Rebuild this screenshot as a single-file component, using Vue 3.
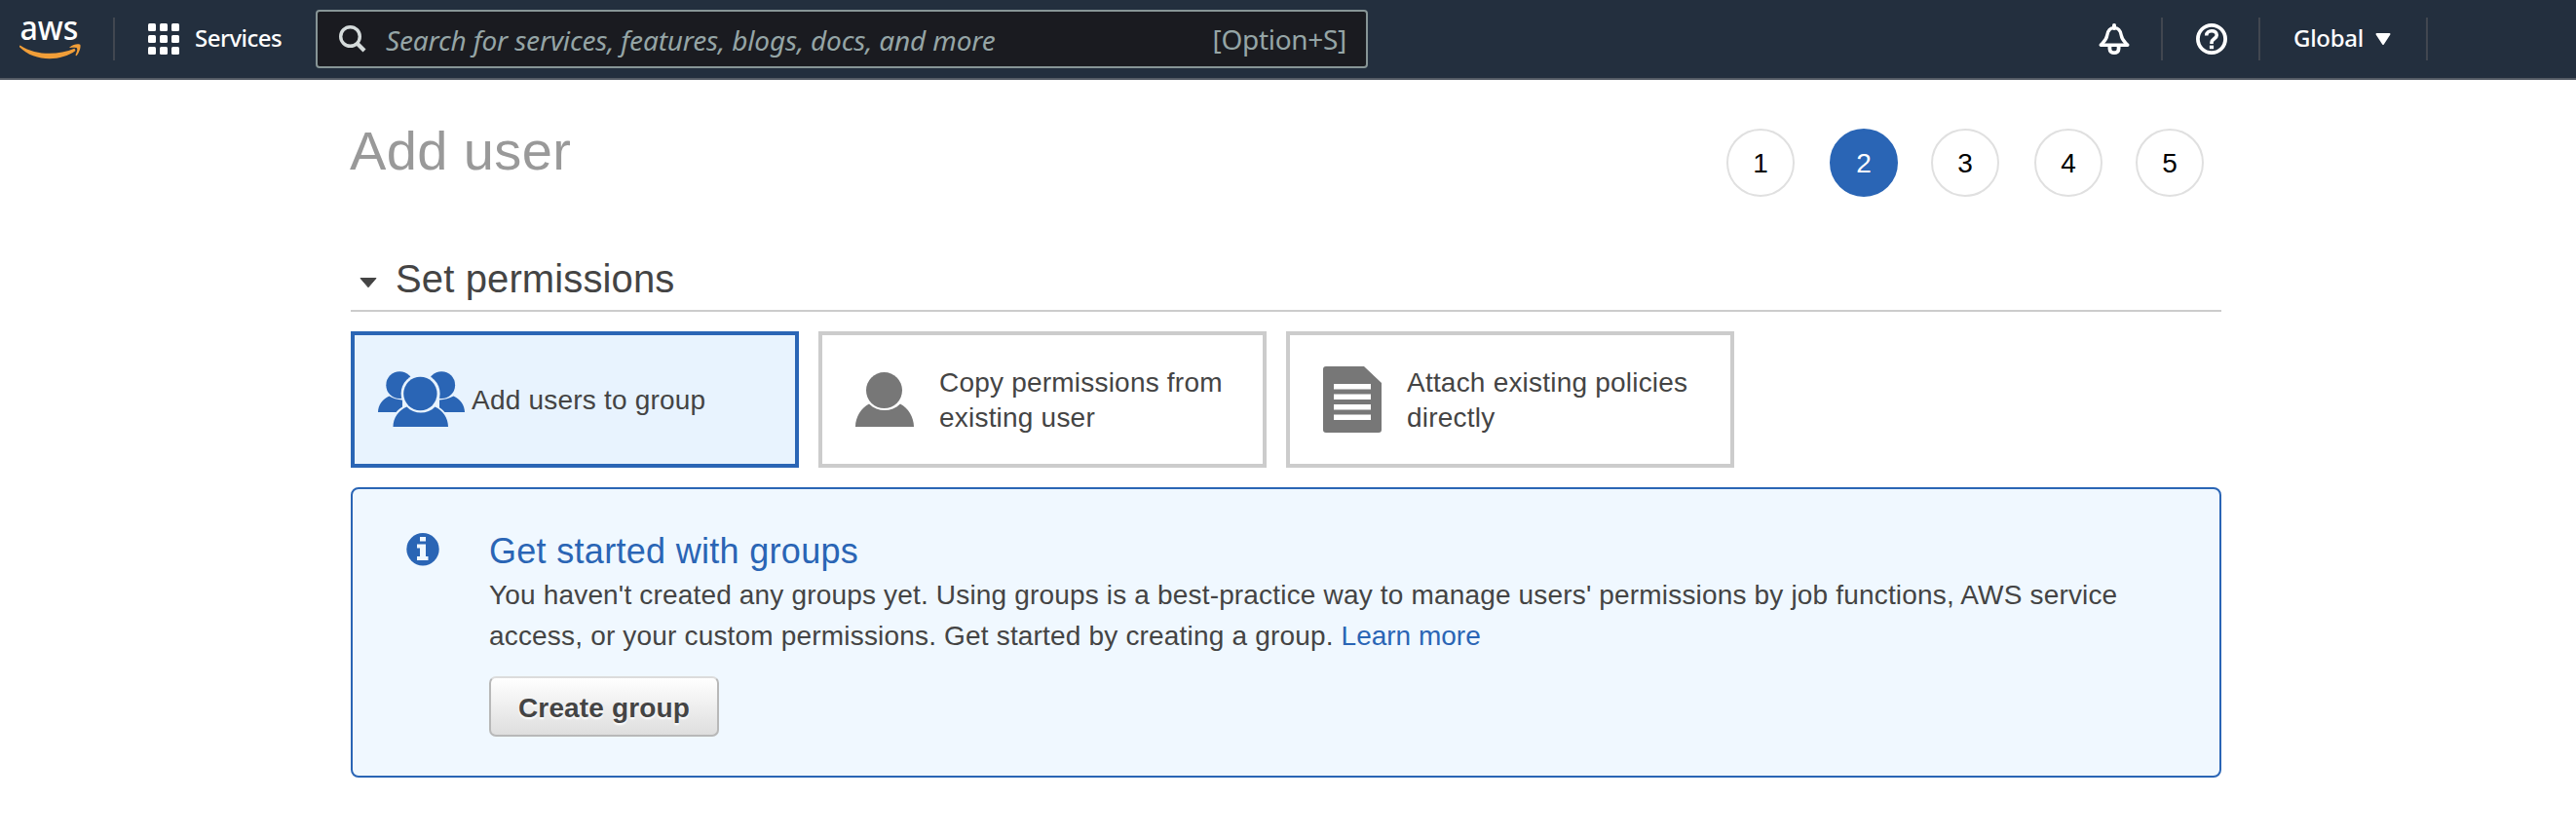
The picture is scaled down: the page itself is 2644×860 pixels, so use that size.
<script setup>
const steps = [1, 2, 3, 4, 5]
const current = 2
</script>

<template>
  <div class="page">
    <header class="nav">
      <svg class="logo" width="66" height="44" viewBox="0 0 66 44">
        <text x="2.4" y="25.4" textLength="60" lengthAdjust="spacingAndGlyphs">aws</text>
        <path d="M3 30.700C19 41 41 41 58.500 33.800L59.500 36C44 47.500 17 47.500 2 32.200Q1.800 30.200 3 30.700Z" fill="#f19e38" />
        <path d="M53.500 32.500C58 28.500 64.300 29 64.500 30.300C65 33.500 63 38.500 60.700 41C59.500 41.700 59.500 40.500 59.700 40C61 36.500 61.800 34.500 61 33.400C60 32.400 56.500 32.700 54 33.100C53.100 33.200 53 32.900 53.500 32.500Z" fill="#f19e38" />
      </svg>
      <i class="rule r1"></i>
      <svg class="grid" width="32" height="32" viewBox="0 0 32 32" fill="#fff">
        <template v-for="r in 3" :key="r">
          <rect v-for="c in 3" :key="c" :x="(c - 1) * 12" :y="(r - 1) * 12" width="8" height="8" rx="1.5" />
        </template>
      </svg>
      <span class="services">Services</span>
      <div class="search">
        <svg width="28" height="28" viewBox="0 0 28 28" fill="none" stroke="#d5dbdb">
          <circle cx="11.500" cy="11.500" r="9.800" stroke-width="3.400" />
          <path d="M18.500 18.500L26 26" stroke-width="4.200" />
        </svg>
        <span class="placeholder">Search for services, features, blogs, docs, and more</span>
        <span class="shortcut">[Option+S]</span>
      </div>
      <svg class="bell" width="32" height="32" viewBox="0 0 32 32" fill="none" stroke="#fff">
        <path d="M16 2V5" stroke-width="4" stroke-linecap="round" />
        <path d="M2.200 22.200H29.800C27 19 24 17.500 23.200 12C22.400 7 20.300 4.600 16 4.600S9.600 7 8.800 12C8 17.500 5 19 2.200 22.200Z" stroke-width="3.400" stroke-linejoin="round" />
        <path d="M11.400 23V26C11.400 31.600 20.600 31.600 20.600 26V23" stroke-width="3.800" />
      </svg>
      <i class="rule r2"></i>
      <svg class="help" width="32" height="32" viewBox="0 0 32 32" fill="none" stroke="#fff">
        <circle cx="16" cy="16" r="14.100" stroke-width="3.800" />
        <path d="M10.700 12.500C10.700 6.300 21.300 6.300 21.300 12C21.300 15.500 16 16 16 19.500V21" stroke-width="3.600" />
        <path d="M16 22.600V26.200" stroke-width="4.200" />
      </svg>
      <i class="rule r3"></i>
      <span class="region">Global</span>
      <svg class="caret" width="16" height="12" viewBox="0 0 16 12"><path d="M1.500 1H14.500L8 11Z" fill="#fff" stroke="#fff" stroke-width="2" stroke-linejoin="round" /></svg>
      <i class="rule r4"></i>
    </header>

    <main>
      <div class="head">
        <h1>Add user</h1>
        <ol class="steps">
          <li v-for="s in steps" :key="s" :class="{ active: s === current }">{{ s }}</li>
        </ol>
      </div>

      <h2>
        <svg width="18" height="11" viewBox="0 0 18 11"><path d="M1 .5H17L9 9.800Z" fill="#444" stroke="#444" stroke-linejoin="round" /></svg>
        <span>Set permissions</span>
      </h2>

      <div class="cards">
        <div class="card selected">
          <svg width="90" height="58" viewBox="0 0 90 58" fill="#2a65b5">
            <circle cx="22.200" cy="14.200" r="13.900" />
            <circle cx="65.200" cy="14.200" r="13.900" />
            <path d="M0 42C0 35 5 28 11.500 25.500Q17 29 25 29.500V42Z" />
            <path d="M89 42C89 35 84 28 77.500 25.500Q71 29 63 29.500V42Z" />
            <path d="M11.500 60C12 46 22 32 43.500 32S75 46 75.500 60Z" fill="#e8f3fe" />
            <circle cx="43.600" cy="23" r="20" fill="#e8f3fe" />
            <circle cx="43.400" cy="23" r="17.200" />
            <path d="M15.500 57C15.500 48 21 40 29.500 36.500C37 44.500 51 44.500 58.500 36.500C66.500 40 72 48 72 57Z" />
          </svg>
          <span class="label">Add users to group</span>
        </div>
        <div class="card">
          <svg width="60" height="58" viewBox="0 0 60 58" fill="#777">
            <circle cx="29.500" cy="19.600" r="18.500" />
            <path d="M0 57C0 47 6 37.500 14 33.500C23 42.300 37 42.300 46 33.500C54 37.500 60 47 60 57Z" />
          </svg>
          <span class="label">Copy permissions from existing user</span>
        </div>
        <div class="card">
          <svg width="60" height="68" viewBox="0 0 60 68">
            <path d="M3 0H42L60 17V65Q60 68 57 68H3Q0 68 0 65V3Q0 0 3 0Z" fill="#777" />
            <path d="M11 20.800H49M11 31.200H49M11 41.800H49M11 52.200H49" stroke="#fff" stroke-width="5.400" />
          </svg>
          <span class="label">Attach existing policies directly</span>
        </div>
      </div>

      <section class="info">
        <svg width="34" height="34" viewBox="0 0 34 34">
          <circle cx="17" cy="16.700" r="16.700" fill="#2a65b5" />
          <path d="M14 4H20V8.500H14ZM11 11.500H20V24H22.500V28H11V24H14V15.500H11Z" fill="#f0f8ff" />
        </svg>
        <div class="copy">
          <h3>Get started with groups</h3>
          <p>
            <span class="l1">You haven't created any groups yet. Using groups is a best-practice way to manage users' permissions by job functions, AWS service</span><br>
            <span class="l2">access, or your custom permissions. Get started by creating a group. <a>Learn more</a></span>
          </p>
          <button>Create group</button>
        </div>
      </section>
    </main>
  </div>
</template>

<style>
body { background: #fff; }
</style>

<style scoped>
.page { width: 2644px; height: 860px; overflow: hidden; background: #fff; font-family: "Liberation Sans", sans-serif; color: #444; }
.nav { box-sizing: border-box; height: 82px; display: flex; align-items: center; background: #232f3e; border-bottom: 2px solid #545b64; color: #fff; font-family: "Noto Sans", sans-serif; white-space: nowrap; }
.nav svg { flex: none; overflow: visible; }
.logo { margin-left: 18px; margin-top: -4px; }
.logo text { font: 500 35px "Noto Sans", sans-serif; fill: #fff; }
.rule { flex: none; width: 2px; height: 44px; background: #414750; }
.r1 { margin-left: 32px; }
.grid { margin-left: 34px; }
.services { margin-left: 16px; width: 124px; padding-bottom: 2px; font-size: 24px; font-weight: 500; letter-spacing: -.55px; line-height: 34px; }
.search { box-sizing: border-box; width: 1080px; height: 60px; border: 2px solid #879596; border-radius: 4px; background: #1a1b20; display: flex; align-items: center; padding: 0 20px 0 22px; color: #95a5a6; font-size: 28px; line-height: 38px; }
.placeholder { margin-left: 20px; padding-top: 2px; flex: 1; font-style: italic; font-weight: 400; letter-spacing: -.155px; }
.shortcut { letter-spacing: -.3px; }
.bell { margin-left: 750px; }
.r2 { margin-left: 32px; }
.help { margin-left: 34px; }
.r3 { margin-left: 32px; }
.region { margin-left: 34px; width: 84px; padding-bottom: 2px; font-size: 24px; font-weight: 500; letter-spacing: -.3px; line-height: 34px; }
.caret { margin-left: 0; }
.r4 { margin-left: 36px; }

main { width: 1920px; margin-left: 360px; }
.head { height: 174px; display: flex; justify-content: space-between; }
h1 { margin: 41px 0 0 -1px; font-size: 56px; font-weight: 400; line-height: 64px; color: #999; letter-spacing: .4px; }
.steps { list-style: none; margin: 50px 18px 0 0; padding: 0; display: flex; gap: 34px; }
.steps li { box-sizing: border-box; width: 70px; height: 70px; border: 2px solid #e0e0e0; border-radius: 50%; font-size: 28px; line-height: 68px; text-align: center; color: #000; }
.steps li:nth-child(even) { margin-left: 2px; }
.steps li.active { background: #2a65b5; border-color: #2a65b5; color: #fff; }
h2 { box-sizing: border-box; margin: 0; height: 64px; border-bottom: 2px solid #ccc; display: flex; align-items: center; font-size: 40px; line-height: 46px; font-weight: 400; padding: 0 0 2px 9px; }
h2 svg { margin-top: 8px; }
h2 span { margin-left: 19px; letter-spacing: .13px; }
.cards { display: flex; gap: 20px; margin-top: 20px; }
.card { box-sizing: border-box; width: 460px; height: 140px; border: 4px solid #ccc; display: flex; align-items: center; padding-left: 34px; font-size: 28px; line-height: 36px; letter-spacing: .21px; }
.card svg { flex: none; }
.card .label { margin-left: 26px; padding-top: 2px; width: 310px; }
.card.selected { padding-left: 24px; border-color: #2a65b5; background: #e8f3fe; }
.card.selected .label { margin-left: 6px; }
.info { box-sizing: border-box; margin-top: 20px; height: 298px; border: 2px solid #2a65b5; border-radius: 8px; background: #f0f8ff; display: flex; padding: 45px 0 0 55px; }
.info > svg { flex: none; }
.copy { margin-left: 51px; }
h3 { margin: -2px 0 0; font-size: 36px; line-height: 42px; font-weight: 400; color: #2a65b5; letter-spacing: .3px; }
p { margin: 3px 0 0; font-size: 28px; line-height: 42px; white-space: nowrap; }
.l1 { letter-spacing: .172px; }
.l2 { letter-spacing: .18px; }
a { color: #2a65b5; letter-spacing: 0; }
button { display: block; box-sizing: border-box; margin: 20px 0 0; width: 236px; height: 62px; padding: 3px 0 0; border: 2px solid #b8b8b8; border-top-color: #dcdcdc; border-radius: 7px; background: linear-gradient(#fff, #dedede); font: bold 28px/34px "Liberation Sans", sans-serif; letter-spacing: .15px; color: #444; text-shadow: 0 2px 2px #fff; }
</style>
